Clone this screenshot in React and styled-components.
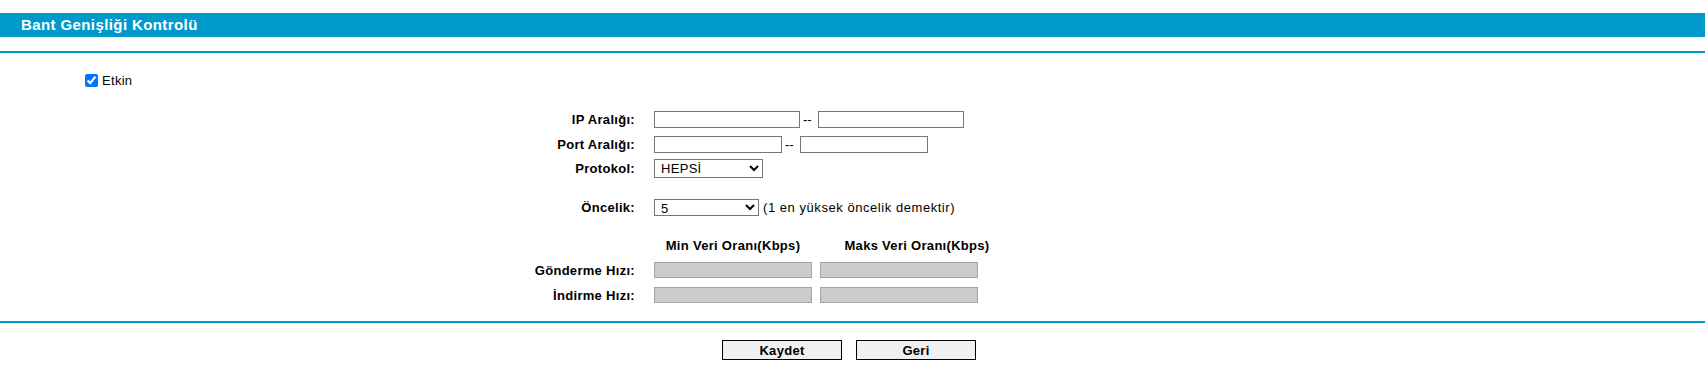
import React from 'react';
import styled, { createGlobalStyle } from 'styled-components';

const GlobalStyle = createGlobalStyle`
  body {
    margin: 0;
    background: #ffffff;
    font-family: "Liberation Sans", Arial, sans-serif;
    font-size: 13px;
    color: #000000;
  }
`;

const Page = styled.div`
  width: 1705px;
  padding-top: 13px;
`;

const TitleBar = styled.div`
  height: 24px;
  line-height: 24px;
  background-color: #0099cc;
  color: #ffffff;
  font-size: 15px;
  font-weight: bold;
  letter-spacing: 0.4px;
  padding-left: 21px;
`;

const Divider = styled.div`
  height: 2px;
  background-color: #0099cc;
  margin-top: ${props => props.top}px;
`;

const EnableRow = styled.label`
  display: flex;
  align-items: center;
  gap: 4px;
  margin-top: 21px;
  padding-left: 85px;
  height: 13px;
  font-size: 13px;
  letter-spacing: 0.3px;
`;

const Check = styled.input`
  width: 13px;
  height: 13px;
  margin: 0;
`;

const Row = styled.div`
  display: flex;
  align-items: center;
  margin-top: ${props => props.top}px;
`;

const Label = styled.div`
  width: 635px;
  text-align: right;
  font-weight: bold;
  font-size: 13px;
  letter-spacing: 0.3px;
  padding-right: 19px;
  box-sizing: content-box;
`;

const Field = styled.div`
  display: flex;
  align-items: center;
`;

const TextInput = styled.input`
  box-sizing: border-box;
  width: ${props => props.width}px;
  height: 17px;
  margin: 0;
  padding: 1px 2px;
  border: 1px solid #767676;
  background: #ffffff;
  font-family: inherit;
  font-size: 13px;
`;

const RateInput = styled(TextInput)`
  height: 16px;
  background: #cccccc;
  border-color: #a3a3a3;
`;

const Dash = styled.span`
  padding: 0 6px 0 3px;
  font-size: 13px;
`;

const Select = styled.select`
  box-sizing: border-box;
  width: ${props => props.width}px;
  height: ${props => props.height}px;
  margin: 0;
  padding: 0 0 0 2px;
  border: 1px solid #767676;
  border-radius: 0;
  background: #ffffff;
  font-family: inherit;
  font-size: 13px;
  letter-spacing: 0.3px;
  color: #000000;
`;

const Hint = styled.span`
  margin-left: 4px;
  font-size: 13px;
  letter-spacing: 0.55px;
`;

const HeadCell = styled.div`
  width: ${props => props.width}px;
  text-align: center;
  font-weight: bold;
  font-size: 13px;
  letter-spacing: 0.3px;
  white-space: nowrap;
`;

const RateGap = styled.div`
  width: 8px;
`;

const ButtonBar = styled.div`
  display: flex;
  justify-content: center;
  gap: 14px;
  margin-top: 17px;
  padding-right: 7px;
`;

const Button = styled.button`
  width: 120px;
  height: 20px;
  padding: 0;
  border: 1px solid #000000;
  border-radius: 0;
  background-color: #f0f0f0;
  font-family: inherit;
  font-size: 13px;
  font-weight: bold;
  letter-spacing: 0.3px;
  color: #000000;
`;

const App = () => {
  return (
    <Page>
      <GlobalStyle />
      <TitleBar>Bant Genişliği Kontrolü</TitleBar>
      <Divider top={14} />

      <EnableRow>
        <Check type="checkbox" defaultChecked />
        Etkin
      </EnableRow>

      <Row top={24}>
        <Label>IP Aralığı:</Label>
        <Field>
          <TextInput width={146} />
          <Dash>--</Dash>
          <TextInput width={146} />
        </Field>
      </Row>

      <Row top={8}>
        <Label>Port Aralığı:</Label>
        <Field>
          <TextInput width={128} />
          <Dash>--</Dash>
          <TextInput width={128} />
        </Field>
      </Row>

      <Row top={6}>
        <Label>Protokol:</Label>
        <Field>
          <Select width={109} height={19} defaultValue="all">
            <option value="all">HEPSİ</option>
            <option value="tcp">TCP</option>
            <option value="udp">UDP</option>
          </Select>
        </Field>
      </Row>

      <Row top={21}>
        <Label>Öncelik:</Label>
        <Field>
          <Select width={105} height={17} defaultValue="5">
            {[1, 2, 3, 4, 5, 6, 7, 8].map(n => (
              <option key={n} value={String(n)}>{n}</option>
            ))}
          </Select>
          <Hint>(1 en yüksek öncelik demektir)</Hint>
        </Field>
      </Row>

      <Row top={22}>
        <Label />
        <Field>
          <HeadCell width={158}>Min Veri Oranı(Kbps)</HeadCell>
          <RateGap />
          <HeadCell width={194}>Maks Veri Oranı(Kbps)</HeadCell>
        </Field>
      </Row>

      <Row top={9}>
        <Label>Gönderme Hızı:</Label>
        <Field>
          <RateInput width={158} />
          <RateGap />
          <RateInput width={158} />
        </Field>
      </Row>

      <Row top={9}>
        <Label>İndirme Hızı:</Label>
        <Field>
          <RateInput width={158} />
          <RateGap />
          <RateInput width={158} />
        </Field>
      </Row>

      <Divider top={18} />

      <ButtonBar>
        <Button>Kaydet</Button>
        <Button>Geri</Button>
      </ButtonBar>
    </Page>
  );
};

export default App;
